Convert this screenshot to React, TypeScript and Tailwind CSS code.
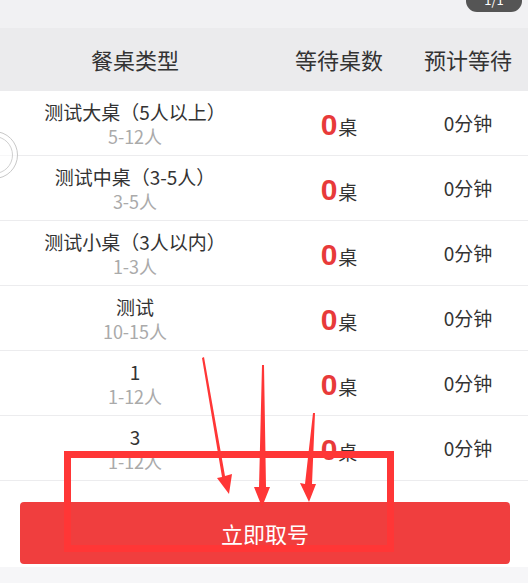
import React from 'react';

interface TableRow {
  name: string;
  range: string;
  wait: number;
  minutes: number;
}

const rows: TableRow[] = [
  { name: '测试大桌（5人以上）', range: '5-12人', wait: 0, minutes: 0 },
  { name: '测试中桌（3-5人）', range: '3-5人', wait: 0, minutes: 0 },
  { name: '测试小桌（3人以内）', range: '1-3人', wait: 0, minutes: 0 },
  { name: '测试', range: '10-15人', wait: 0, minutes: 0 },
  { name: '1', range: '1-12人', wait: 0, minutes: 0 },
  { name: '3', range: '1-12人', wait: 0, minutes: 0 },
];

// hand-drawn annotation: red box + three arrows pointing at the button
function Annotation() {
  return (
    <svg className="absolute left-0 top-0 pointer-events-none" width="528" height="583" viewBox="0 0 528 583">
      <rect x="67.5" y="454.5" width="323" height="94" fill="none" stroke="#ff3636" strokeWidth="7" />
      {/* arrow 1 */}
      <polygon points="202,358 204,357 225,476 232,474 229,494 217,478 222,477" fill="#ff3636" />
      {/* arrow 2 */}
      <polygon points="262,365 264,365 266,487 270,487 262,507 254,487 259,487" fill="#ff3636" />
      {/* arrow 3 */}
      <polygon points="313,413 315,413 312,484 316,484 309,502 300,483 305,484" fill="#ff3636" />
    </svg>
  );
}

export default function App() {
  return (
    <div
      className="relative w-[528px] h-[583px] overflow-hidden bg-[#f6f6f8] text-[#333]"
      style={{ fontFamily: '"Noto Sans CJK SC", "Noto Sans", sans-serif' }}
    >
      {/* top strip */}
      <div className="h-[28px] bg-[#f1f1f3] relative">
        <div className="absolute right-[6px] top-[-10px] w-[56px] h-[22px] rounded-full bg-[#555] text-white text-[13px] leading-[20px] text-center">
          1/1
        </div>
      </div>

      {/* header */}
      <div className="flex h-[63px] bg-[#ebebed] items-center text-[22px]">
        <div className="w-[270px] text-center">餐桌类型</div>
        <div className="w-[138px] text-center">等待桌数</div>
        <div className="w-[120px] text-center">预计等待</div>
      </div>

      {/* body */}
      <div className="bg-white pb-[86px]">
        {rows.map((r, i) => (
          <div key={i} className="flex h-[65px] items-center border-b border-[#ececee]">
            <div className="w-[270px] flex flex-col items-center leading-[25px] pt-[1px]">
              <span className="text-[19px] text-[#333]">{r.name}</span>
              <span className="text-[18px] text-[#aaa]">{r.range}</span>
            </div>
            <div className="w-[138px] flex justify-center items-baseline pt-[6px]">
              <span className="text-[30px] font-bold text-[#e83a3a] leading-none" style={{ fontFamily: '"Liberation Sans", sans-serif' }}>
                {r.wait}
              </span>
              <span className="text-[19px] ml-[1px]">桌</span>
            </div>
            <div className="w-[120px] text-center text-[19px]">{r.minutes}分钟</div>
          </div>
        ))}
      </div>

      {/* take number button */}
      <div className="absolute left-[20px] top-[502px] w-[490px] h-[62px] rounded-[4px] bg-[#f03e3e] flex items-center justify-center text-white text-[22px]">
        立即取号
      </div>

      {/* floating helper ball on the left edge */}
      <div className="absolute left-[-30px] top-[131px] w-[48px] h-[48px] rounded-full border border-[#c8c8c8] bg-white/60 flex items-center justify-center">
        <div className="w-[38px] h-[38px] rounded-full border border-[#d0d0d0]" />
      </div>

      <Annotation />
    </div>
  );
}
